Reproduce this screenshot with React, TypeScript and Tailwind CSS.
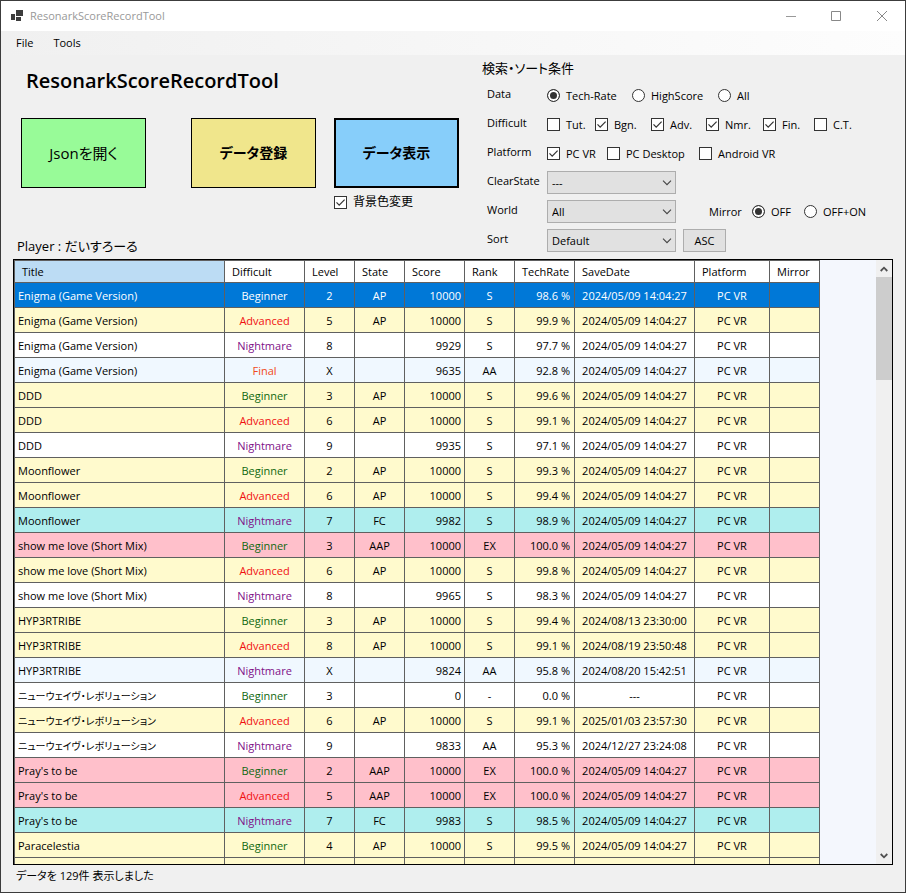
import clsx from "clsx";
import type { ReactNode } from "react";

type Difficulty = "Beginner" | "Advanced" | "Nightmare" | "Final";

type ScoreRow = [
  title: string,
  difficulty: Difficulty,
  level: string,
  state: string,
  score: string,
  rank: string,
  rate: string,
  date: string,
];

const FIRST_SAVE = "2024/05/09 14:04:27";

const rows: ScoreRow[] = [
  ["Enigma (Game Version)", "Beginner", "2", "AP", "10000", "S", "98.6 %", FIRST_SAVE],
  ["Enigma (Game Version)", "Advanced", "5", "AP", "10000", "S", "99.9 %", FIRST_SAVE],
  ["Enigma (Game Version)", "Nightmare", "8", "", "9929", "S", "97.7 %", FIRST_SAVE],
  ["Enigma (Game Version)", "Final", "X", "", "9635", "AA", "92.8 %", FIRST_SAVE],
  ["DDD", "Beginner", "3", "AP", "10000", "S", "99.6 %", FIRST_SAVE],
  ["DDD", "Advanced", "6", "AP", "10000", "S", "99.1 %", FIRST_SAVE],
  ["DDD", "Nightmare", "9", "", "9935", "S", "97.1 %", FIRST_SAVE],
  ["Moonflower", "Beginner", "2", "AP", "10000", "S", "99.3 %", FIRST_SAVE],
  ["Moonflower", "Advanced", "6", "AP", "10000", "S", "99.4 %", FIRST_SAVE],
  ["Moonflower", "Nightmare", "7", "FC", "9982", "S", "98.9 %", FIRST_SAVE],
  ["show me love (Short Mix)", "Beginner", "3", "AAP", "10000", "EX", "100.0 %", FIRST_SAVE],
  ["show me love (Short Mix)", "Advanced", "6", "AP", "10000", "S", "99.8 %", FIRST_SAVE],
  ["show me love (Short Mix)", "Nightmare", "8", "", "9965", "S", "98.3 %", FIRST_SAVE],
  ["HYP3RTRIBE", "Beginner", "3", "AP", "10000", "S", "99.4 %", "2024/08/13 23:30:00"],
  ["HYP3RTRIBE", "Advanced", "8", "AP", "10000", "S", "99.1 %", "2024/08/19 23:50:48"],
  ["HYP3RTRIBE", "Nightmare", "X", "", "9824", "AA", "95.8 %", "2024/08/20 15:42:51"],
  ["ニューウェイヴ・レボリューション", "Beginner", "3", "", "0", "-", "0.0 %", "---"],
  ["ニューウェイヴ・レボリューション", "Advanced", "6", "AP", "10000", "S", "99.1 %", "2025/01/03 23:57:30"],
  ["ニューウェイヴ・レボリューション", "Nightmare", "9", "", "9833", "AA", "95.3 %", "2024/12/27 23:24:08"],
  ["Pray's to be", "Beginner", "2", "AAP", "10000", "EX", "100.0 %", FIRST_SAVE],
  ["Pray's to be", "Advanced", "5", "AAP", "10000", "EX", "100.0 %", FIRST_SAVE],
  ["Pray's to be", "Nightmare", "7", "FC", "9983", "S", "98.5 %", FIRST_SAVE],
  ["Paracelestia", "Beginner", "4", "AP", "10000", "S", "99.5 %", FIRST_SAVE],
];

const columns = [
  { name: "Title", width: "w-[210px]" },
  { name: "Difficult", width: "w-[80px]" },
  { name: "Level", width: "w-[50px]" },
  { name: "State", width: "w-[50px]" },
  { name: "Score", width: "w-[60px]" },
  { name: "Rank", width: "w-[50px]" },
  { name: "TechRate", width: "w-[60px]" },
  { name: "SaveDate", width: "w-[120px]" },
  { name: "Platform", width: "w-[75px]" },
  { name: "Mirror", width: "w-[50px]" },
];

const stateColors: Record<string, string> = {
  AP: "bg-[#fffacd]",
  FC: "bg-[#afeeee]",
  AAP: "bg-[#ffc0cb]",
};

const difficultyColors: Record<Difficulty, string> = {
  Beginner: "text-[#106810]",
  Advanced: "text-[#f01010]",
  Nightmare: "text-[#801088]",
  Final: "text-[#f04a20]",
};

function rowColor(level: string, state: string) {
  if (state) return stateColors[state];
  return level === "X" ? "bg-[#f0f8ff]" : "bg-white";
}

function CheckBox({ label, checked = false }: { label: string; checked?: boolean }) {
  return (
    <label className="flex items-center gap-[6px] whitespace-nowrap">
      <span className="relative size-[13px]">
        <input
          type="checkbox"
          defaultChecked={checked}
          className="peer block size-[13px] appearance-none border border-[#333] bg-white"
        />
        <svg viewBox="0 0 13 13" className="pointer-events-none absolute inset-0 hidden size-[13px] peer-checked:block">
          <path d="M2.5 6.3 5.2 9.1 10.6 3.6" fill="none" stroke="#333" strokeWidth="1.2" />
        </svg>
      </span>
      {label}
    </label>
  );
}

function Radio({ name, label, checked = false }: { name: string; label: string; checked?: boolean }) {
  return (
    <label className="flex items-center gap-[6px] whitespace-nowrap">
      <input
        type="radio"
        name={name}
        defaultChecked={checked}
        className="size-[13px] appearance-none rounded-full border border-[#333] bg-white checked:bg-[#333] checked:shadow-[inset_0_0_0_2px_white]"
      />
      {label}
    </label>
  );
}

function Select({ id, value }: { id: string; value: string }) {
  return (
    <div className="relative h-[23px] w-[129px]">
      <select id={id} className="size-full appearance-none border border-[#adadad] bg-[#e1e1e1] pl-1 leading-none">
        <option>{value}</option>
      </select>
      <svg viewBox="0 0 10 6" className="pointer-events-none absolute top-[9px] right-1 h-[6px] w-[10px]">
        <path d="M1 .7 5 4.7 9 .7" fill="none" stroke="#444" strokeWidth="1.1" />
      </svg>
    </div>
  );
}

function FilterRow({ label, htmlFor, children }: { label: string; htmlFor?: string; children: ReactNode }) {
  return (
    <div className="flex h-[29px] items-center pl-[5px]">
      {htmlFor ? (
        <label htmlFor={htmlFor} className="w-[60px] shrink-0 pb-[3px]">{label}</label>
      ) : (
        <span className="w-[60px] shrink-0 pb-[3px]">{label}</span>
      )}
      {children}
    </div>
  );
}

function TitleBar() {
  return (
    <header className="flex h-[30px] shrink-0 items-center bg-white pl-[10px] text-[#999]">
      <svg viewBox="0 0 12 12" className="size-3" fill="#3c3c3c">
        <path d="M0 4h4v6H0zM5 0h7v6H5zM5 7h5v4H5z" />
      </svg>
      <span className="ml-[7px]">ResonarkScoreRecordTool</span>
      <div className="ml-auto flex">
        <button aria-label="Minimize" className="flex h-[30px] w-[45px] items-center justify-center">
          <svg viewBox="0 0 10 10" className="size-[10px]" stroke="#999">
            <path d="M0 5.500h10" />
          </svg>
        </button>
        <button aria-label="Maximize" className="flex h-[30px] w-[46px] items-center justify-center">
          <svg viewBox="0 0 10 10" className="size-[10px]" fill="none" stroke="#888">
            <path d="M.5.5h9v9h-9z" />
          </svg>
        </button>
        <button aria-label="Close" className="flex h-[30px] w-[46px] items-center justify-center">
          <svg viewBox="0 0 10 10" className="size-[10px]" stroke="#888">
            <path d="M0 0 10 10M10 0 0 10" />
          </svg>
        </button>
      </div>
    </header>
  );
}

function ScoreTable() {
  const line = "border-r border-b border-[#606060] p-0 font-normal";
  const cell = clsx(line, "pt-[2px]");

  return (
    <table className="w-[806px] shrink-0 table-fixed border-separate border-spacing-0 self-start border-t border-l border-[#606060]">
      <thead>
        <tr className="h-[22px]">
          {columns.map(({ name, width }, i) => (
            <th key={name} className={clsx(line, width, "pl-[7px] text-left", i === 0 ? "bg-[#bcdcf4]" : "bg-white")}>
              {name}
            </th>
          ))}
        </tr>
      </thead>
      <tbody>
        {rows.map(([title, difficulty, level, state, score, rank, rate, date], i) => {
          const selected = i === 0;
          const kana = title.startsWith("ニ");
          return (
            <tr key={i} className={clsx("h-[25px]", selected ? "bg-[#0078d7] text-white" : rowColor(level, state))}>
              <td className={clsx(cell, "pl-[3px] whitespace-nowrap", kana && "text-[10px]")}>{title}</td>
              <td className={clsx(cell, "text-center", !selected && difficultyColors[difficulty])}>{difficulty}</td>
              <td className={clsx(cell, "text-center")}>{level}</td>
              <td className={clsx(cell, "text-center")}>{state}</td>
              <td className={clsx(cell, "pr-[3px] text-right")}>{score}</td>
              <td className={clsx(cell, "text-center")}>{rank}</td>
              <td className={clsx(cell, "pr-1 text-right")}>{rate}</td>
              <td className={clsx(cell, "text-center whitespace-nowrap")}>{date}</td>
              <td className={clsx(cell, "text-center")}>PC VR</td>
              <td className={cell} />
            </tr>
          );
        })}
        <tr className="h-[25px] bg-[#fffacd]">
          {columns.map(({ name }) => (
            <td key={name} className={cell} />
          ))}
        </tr>
      </tbody>
    </table>
  );
}

function ScrollBar() {
  return (
    <div className="ml-auto flex w-4 shrink-0 flex-col bg-[#f0f0f0]">
      <button aria-label="Scroll up" className="flex h-[17px] items-center justify-center">
        <svg viewBox="0 0 8 6" className="h-[6px] w-2">
          <path d="M.7 5 4 1.700 7.300 5" fill="none" stroke="#505050" strokeWidth="1.800" />
        </svg>
      </button>
      <div className="h-[103px] bg-[#cdcdcd]" />
      <button aria-label="Scroll down" className="mt-auto flex h-[17px] items-center justify-center">
        <svg viewBox="0 0 8 6" className="h-[6px] w-2">
          <path d="M.7 1 4 4.300 7.300 1" fill="none" stroke="#505050" strokeWidth="1.800" />
        </svg>
      </button>
    </div>
  );
}

export default function App() {
  return (
    <div className="flex h-screen flex-col border border-[#3c3c3c] bg-[#f0f0f0] font-['Open_Sans','Noto_Sans_CJK_JP',sans-serif] text-[11px] leading-4 text-black [font-feature-settings:'palt']">
      <TitleBar />
      <nav className="flex h-6 shrink-0 items-center gap-5 bg-linear-to-r from-[#f0f0f0] to-[#fdfdfd] pl-[15px]">
        <button>File</button>
        <button>Tools</button>
      </nav>

      <section className="flex h-[204px] shrink-0 px-3">
        <div className="flex w-[469px] shrink-0 flex-col">
          <h1 className="mt-3 pl-[13px] text-[20px] leading-7 font-semibold">ResonarkScoreRecordTool</h1>
          <div className="mt-[23px] flex items-start pl-2">
            <button className="h-[70px] w-[125px] border border-black bg-[#98fb98] text-[15px]">Jsonを開く</button>
            <button className="ml-[45px] h-[70px] w-[125px] border border-black bg-[#f0e68c] text-[14px] font-semibold">
              データ登録
            </button>
            <div className="ml-[18px]">
              <button className="mb-[6px] block h-[70px] w-[125px] border-2 border-black bg-[#87cefa] text-[14px] font-semibold">
                データ表示
              </button>
              <div className="text-[12px]">
                <CheckBox label="背景色変更" checked />
              </div>
            </div>
          </div>
          <p className="mt-auto pb-[3px] pl-1 text-[13px] leading-5">Player : だいすろーる</p>
        </div>

        <div className="min-w-0 flex-1">
          <h2 className="mt-[3px] mb-[3px] text-[13px] leading-5">検索・ソート条件</h2>
          <FilterRow label="Data">
            <div className="grid grid-cols-[85px_86px_auto]">
              <Radio name="data" label="Tech-Rate" checked />
              <Radio name="data" label="HighScore" />
              <Radio name="data" label="All" />
            </div>
          </FilterRow>
          <FilterRow label="Difficult">
            <div className="grid grid-cols-[48px_56px_55px_57px_51px_auto]">
              <CheckBox label="Tut." />
              <CheckBox label="Bgn." checked />
              <CheckBox label="Adv." checked />
              <CheckBox label="Nmr." checked />
              <CheckBox label="Fin." checked />
              <CheckBox label="C.T." />
            </div>
          </FilterRow>
          <FilterRow label="Platform">
            <div className="grid grid-cols-[60px_92px_auto]">
              <CheckBox label="PC VR" checked />
              <CheckBox label="PC Desktop" />
              <CheckBox label="Android VR" />
            </div>
          </FilterRow>
          <FilterRow label="ClearState" htmlFor="clear-state">
            <Select id="clear-state" value="---" />
          </FilterRow>
          <FilterRow label="World" htmlFor="world">
            <Select id="world" value="All" />
            <span className="ml-[33px] w-[43px]">Mirror</span>
            <div className="grid grid-cols-[52px_auto]">
              <Radio name="mirror" label="OFF" checked />
              <Radio name="mirror" label="OFF+ON" />
            </div>
          </FilterRow>
          <FilterRow label="Sort" htmlFor="sort">
            <Select id="sort" value="Default" />
            <button className="ml-[7px] h-[23px] w-[43px] border border-[#adadad] bg-[#e1e1e1]">ASC</button>
          </FilterRow>
        </div>
      </section>

      <main className="mx-3 flex min-h-0 flex-1 overflow-hidden border border-black bg-[#f4f7fd]">
        <ScoreTable />
        <ScrollBar />
      </main>
      <footer className="flex h-[27px] shrink-0 items-center px-[15px] pb-[6px]">データを 129件 表示しました</footer>
    </div>
  );
}
